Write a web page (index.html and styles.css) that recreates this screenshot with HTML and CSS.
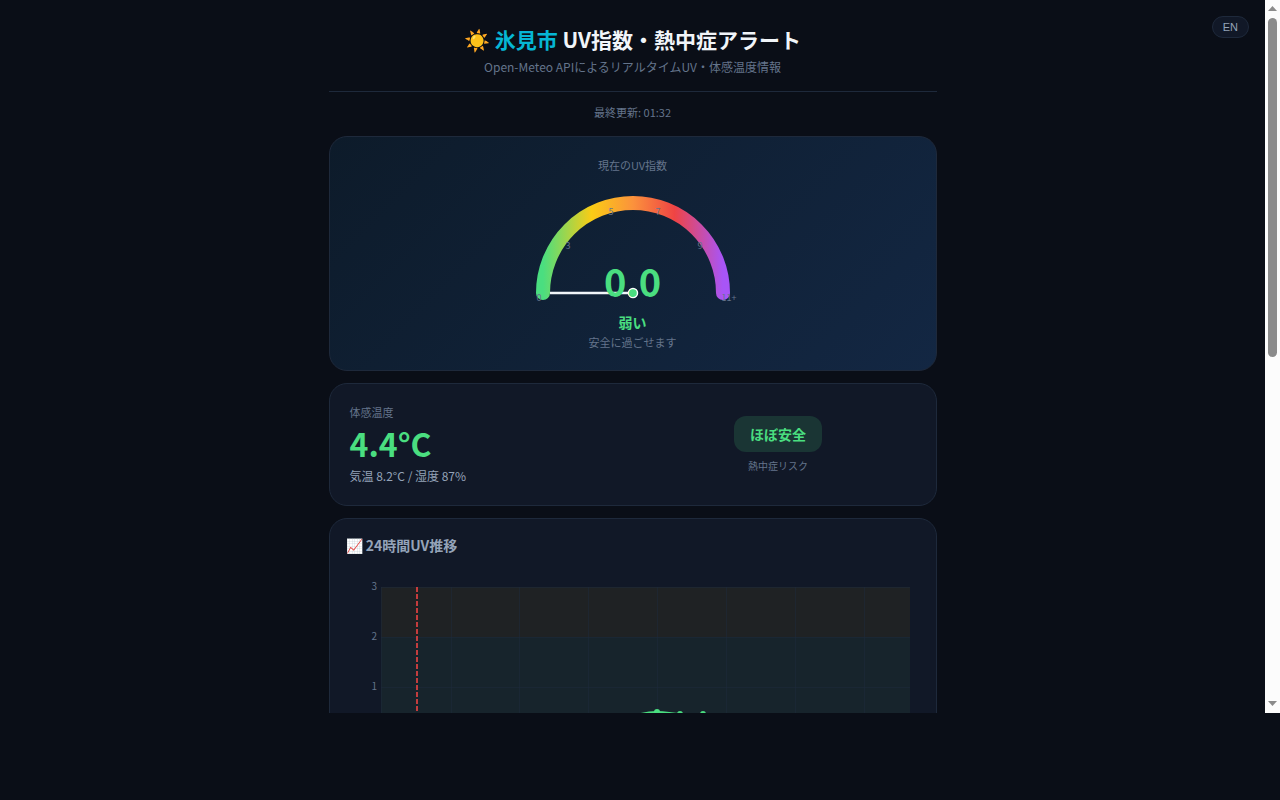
FILE: index.html
```html
<!DOCTYPE html>
<html lang="ja">
  <head>
    <meta charset="UTF-8" />
    <meta name="viewport" content="width=device-width, initial-scale=1.0" />
    <title>氷見市 UV指数・熱中症アラート</title>
    <link rel="stylesheet" href="styles.css">
  </head>

  <body>
    <div class="frame">
      <div class="page">
        <button class="lang-btn" type="button">EN</button>

        <main class="container">
          <header class="header">
            <h1>☀️ <span class="accent">氷見市</span> UV指数・熱中症アラート</h1>
            <p>Open-Meteo APIによるリアルタイムUV・体感温度情報</p>
          </header>

          <div class="updated">最終更新: 01:32</div>

          <!-- Current UV -->
          <section class="card uv-card">
            <div class="label">現在のUV指数</div>
            <svg class="gauge" viewBox="0 0 220 120" width="220" height="120">
              <defs>
                <linearGradient id="uvGrad" x1="0" y1="0" x2="1" y2="0">
                  <stop offset="0%" stop-color="#4ade80" />
                  <stop offset="27%" stop-color="#facc15" />
                  <stop offset="50%" stop-color="#fb923c" />
                  <stop offset="73%" stop-color="#ef4444" />
                  <stop offset="100%" stop-color="#a855f7" />
                </linearGradient>
              </defs>
              <path d="M20 110 A90 90 0 0 1 200 110" fill="none" stroke="url(#uvGrad)" stroke-width="14" stroke-linecap="round" />
              <g class="gauge-ticks">
                <text x="16" y="118">0</text>
                <text x="45" y="66">3</text>
                <text x="88" y="32">5</text>
                <text x="135" y="32">7</text>
                <text x="177" y="66">9</text>
                <text x="206" y="118">11+</text>
              </g>
              <line x1="110" y1="110" x2="27" y2="110" stroke="#f1f5f9" stroke-width="2.5" />
              <circle cx="110" cy="110" r="4.5" fill="#4ade80" stroke="#fff" stroke-width="1.5" />
            </svg>
            <div class="uv-value">0.0</div>
            <div class="uv-level">弱い</div>
            <div class="uv-advice">安全に過ごせます</div>
          </section>

          <!-- Heat risk -->
          <section class="card heat-card">
            <div>
              <div class="label">体感温度</div>
              <div class="temp-value">4.4°C</div>
              <div class="temp-sub">気温 8.2°C / 湿度 87%</div>
            </div>
            <div class="risk">
              <div class="risk-badge">ほぼ安全</div>
              <div class="risk-label">熱中症リスク</div>
            </div>
          </section>

          <!-- 24h chart -->
          <section class="card chart-card">
            <h2>📈 24時間UV推移</h2>
            <svg class="chart" viewBox="0 0 574 190">
              <rect x="35" y="16" width="529" height="50" fill="#1f2224" />
              <rect x="35" y="66" width="529" height="100" fill="#17242c" />
              <g class="grid">
                <path d="M35 16.5H564M35 66.5H564M35 116.5H564M35 166.5H564" />
                <path d="M35.5 16V166M105.5 16V166M173.5 16V166M242.5 16V166M311.5 16V166M380.5 16V166M449.5 16V166M518.5 16V166" />
              </g>
              <g class="axis">
                <text x="31" y="19">3</text>
                <text x="31" y="69">2</text>
                <text x="31" y="119">1</text>
              </g>
              <path class="uv-line" d="M219 164 L242 158 L265 152 L288 145 C297 142 304 141 311 141 C320 141 326 143 334 143 L357 144 L380 150 L403 158 L426 164" />
              <g fill="#4ade80">
                <circle cx="311" cy="141" r="3" />
                <circle cx="334" cy="143" r="3" />
                <circle cx="357" cy="143" r="3" />
              </g>
              <line class="now-line" x1="71" y1="16" x2="71" y2="166" />
            </svg>
          </section>
        </main>
      </div>

      <!-- Scrollbar -->
      <div class="scrollbar">
        <svg width="15" height="17" viewBox="0 0 15 17"><path d="M3 11 L7.5 6 L12 11Z" fill="#8b8b8b" /></svg>
        <div class="thumb"></div>
        <svg width="15" height="17" viewBox="0 0 15 17"><path d="M3 5 L7.5 10 L12 5Z" fill="#8b8b8b" /></svg>
      </div>
    </div>
  </body>
</html>
```
FILE: styles.css
```css
* {
  box-sizing: border-box;
  margin: 0;
  padding: 0;
}

body {
  height: 100vh;
  padding-bottom: 87px;
  background: #0a0e17;
  color: #f1f5f9;
  font-family: "Noto Sans CJK JP", sans-serif;
  overflow: hidden;
}

.frame {
  display: flex;
  height: 100%;
}

.page {
  flex: 1;
  min-width: 0;
  position: relative;
  overflow-y: auto;
  scrollbar-width: none;
}

/* Scrollbar */
.scrollbar {
  width: 15px;
  flex-shrink: 0;
  display: flex;
  flex-direction: column;
  align-items: center;
  background: #fcfcfc;
}

.scrollbar svg {
  display: block;
  flex-shrink: 0;
}

.scrollbar .thumb {
  width: 9px;
  height: 47.5%;
  margin: 1px 0 auto;
  background: #8b8b8b;
  border-radius: 5px;
}

.lang-btn {
  position: absolute;
  top: 16px;
  right: 16px;
  height: 22px;
  padding: 0 10px;
  background: #111827;
  color: #94a3b8;
  border: 1px solid #1e293b;
  border-radius: 11px;
  font-family: "Liberation Sans", sans-serif;
  font-size: 11px;
  cursor: pointer;
}

.container {
  max-width: 640px;
  margin: 0 auto;
  padding: 0 16px;
}

/* Header */
.header {
  padding: 24px 0 15px;
  text-align: center;
  border-bottom: 1px solid #1e293b;
}

.header h1 {
  font-size: 21px;
  line-height: 30px;
}

.header p {
  margin-top: 4px;
  color: #64748b;
  font-size: 12px;
  line-height: 18px;
}

.accent {
  color: #06b6d4;
}

.updated {
  margin: 12px 0 16px;
  color: #64748b;
  font-size: 11px;
  line-height: 16px;
  text-align: center;
}

/* Cards */
.card {
  margin-bottom: 12px;
  padding: 20px;
  background: #111827;
  border: 1px solid #1e293b;
  border-radius: 18px;
}

.label {
  color: #64748b;
  font-size: 11px;
  line-height: 16px;
}

.uv-card {
  padding-bottom: 19px;
  background: linear-gradient(135deg, #0d1b2a, #132743);
  text-align: center;
}

.gauge {
  display: block;
  margin: 10px auto 0;
  overflow: visible;
}

.gauge-ticks {
  fill: #64748b;
  font-size: 9px;
  text-anchor: middle;
}

.uv-value {
  position: relative;
  margin-top: -42px;
  color: #4ade80;
  font-size: 38px;
  font-weight: 700;
  line-height: 40px;
}

.uv-level {
  margin-top: 10px;
  color: #4ade80;
  font-size: 14px;
  font-weight: 700;
  line-height: 22px;
}

.uv-advice {
  color: #64748b;
  font-size: 11px;
  line-height: 18px;
}

/* Heat risk */
.heat-card {
  display: grid;
  grid-template-columns: 1fr 1fr;
  gap: 16px;
  align-items: center;
}

.temp-value {
  color: #4ade80;
  font-size: 32px;
  font-weight: 700;
  line-height: 46px;
}

.temp-sub {
  margin-top: 1px;
  color: #94a3b8;
  font-size: 12px;
  line-height: 18px;
}

.risk {
  text-align: center;
}

.risk-badge {
  display: inline-block;
  padding: 8px 16px;
  background: #1a3534;
  color: #4ade80;
  border-radius: 12px;
  font-size: 14px;
  font-weight: 700;
  line-height: 20px;
  vertical-align: top;
}

.risk-label {
  margin-top: 6px;
  color: #64748b;
  font-size: 10px;
  line-height: 16px;
}

/* Chart */
.chart-card {
  padding: 16px;
}

.chart-card h2 {
  color: #94a3b8;
  font-size: 14px;
  line-height: 20px;
}

.chart {
  display: block;
  width: 100%;
  margin-top: 16px;
}

.grid {
  fill: none;
  stroke: #1e293b;
  stroke-opacity: 0.5;
}

.axis {
  fill: #64748b;
  font-size: 10px;
  text-anchor: end;
}

.uv-line {
  fill: none;
  stroke: #4ade80;
  stroke-width: 2;
}

.now-line {
  stroke: #ef4444;
  stroke-opacity: 0.8;
  stroke-width: 2;
  stroke-dasharray: 5 2;
}
```
